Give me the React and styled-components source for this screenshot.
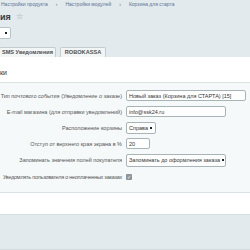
import React from 'react';
import styled, { createGlobalStyle } from 'styled-components';

const Global = createGlobalStyle`
  html, body {
    margin: 0;
    background: #e3eaed;
    font-family: "Liberation Sans", Arial, sans-serif;
  }
`;

const Page = styled.div`
  width: 250px;
  height: 250px;
  overflow: hidden;
  display: flex;
  flex-direction: column;
`;

const Crumbs = styled.div`
  display: flex;
  gap: 8px;
  padding: 1px 0 0 1px;
  height: 8px;
  font-size: 5px;
  line-height: 7px;
  color: #5a7395;
  white-space: nowrap;
`;

const TitleRow = styled.div`
  display: flex;
  align-items: center;
  gap: 5px;
  height: 13px;
  margin-top: 2px;
`;

const Title = styled.span`
  font-size: 9px;
  font-weight: bold;
  color: #3a3a3a;
`;

const Star = styled.span`
  font-size: 8px;
  color: #8a9499;
`;

const SmallSelect = styled.div`
  margin: 4px 0 0 -11px;
  width: 17px;
  height: 10px;
  background: #fff;
  border: 1px solid #b9c3c7;
  border-radius: 2px;
  display: flex;
  align-items: center;
  justify-content: flex-end;
  padding-right: 3px;
  box-sizing: content-box;
`;

const Arrow = styled.span`
  flex: none;
  width: 2px;
  height: 2px;
  background: #222;
`;

const Tabs = styled.div`
  display: flex;
  gap: 4px;
  margin-top: 8px;
  height: 11px;
  margin-left: -1px;
`;

const Tab = styled.div`
  width: ${p => p.w}px;
  background: #f1f5f6;
  border: 1px solid #c3cdd1;
  border-bottom: none;
  border-radius: 2px 2px 0 0;
  font-size: 5.6px;
  font-weight: bold;
  color: #505050;
  display: flex;
  align-items: center;
  justify-content: center;
  white-space: nowrap;
`;

const Header = styled.div`
  background: #fff;
  height: 26px;
  box-sizing: border-box;
  padding: 12px 0 0 0;
  font-size: 7px;
  color: #333;
  border-bottom: 1px solid #dbe3e6;
`;

const Content = styled.div`
  background: #f5f9fa;
  padding: 7px 0 9px;
  display: flex;
  flex-direction: column;
  gap: 4px;
  border-bottom: 1px solid #dbe3e6;
`;

const Row = styled.div`
  display: grid;
  grid-template-columns: 122px auto;
  column-gap: 4px;
  align-items: center;
  min-height: 12px;
`;

const Label = styled.div`
  display: flex;
  justify-content: flex-end;
  font-size: 5.5px;
  letter-spacing: ${p => (p.tight ? '-0.26px' : 'normal')};
  color: #555;
  white-space: nowrap;
`;

const Field = styled.div`
  width: ${p => p.w}px;
  height: ${p => p.h || 11}px;
  box-sizing: border-box;
  background: #fff;
  border: 1px solid #a9b4b9;
  border-radius: 2px;
  font-size: 5.5px;
  color: #333;
  padding: 0 3px 0 2px;
  display: flex;
  align-items: center;
  justify-content: space-between;
  gap: 2px;
  white-space: nowrap;
  overflow: hidden;
`;

const Check = styled.div`
  width: 6px;
  height: 6px;
  background: #8a949a;
  border-radius: 1px;
  color: #fff;
  font-size: 5px;
  line-height: 6px;
  text-align: center;
`;

const Footer = styled.div`
  background: #fff;
  height: 22px;
  border-bottom: 1px solid #d6dee1;
`;

const Bottom = styled.div`
  height: 36px;
  background: #e3eaed;
  border-bottom: 1px solid #d2dadd;
`;

const Tail = styled.div`
  flex: 1;
  background: #eef2f3;
`;

function App() {
  return (
    <Page>
      <Global />
      <Crumbs>
        <span>Настройки продукта</span>
        <span>›</span>
        <span>Настройки модулей</span>
        <span>›</span>
        <span>Корзина для старта</span>
      </Crumbs>
      <TitleRow>
        <Title>ия</Title>
        <Star>☆</Star>
      </TitleRow>
      <SmallSelect><Arrow /></SmallSelect>
      <Tabs>
        <Tab w={55}>SMS Уведомления</Tab>
        <Tab w={44}>ROBOKASSA</Tab>
      </Tabs>
      <Header>ки</Header>
      <Content>
        <Row>
          <Label>Тип почтового события (Уведомление о заказе)</Label>
          <Field w={120}>Новый заказ (Корзина для СТАРТА) [15]</Field>
        </Row>
        <Row>
          <Label>E-mail магазина (для отправки уведомлений)</Label>
          <Field w={100}>info@ssk24.ru</Field>
        </Row>
        <Row>
          <Label>Расположение корзины</Label>
          <Field w={30} h={12}>Справа <Arrow /></Field>
        </Row>
        <Row>
          <Label>Отступ от верхнего края экрана в %</Label>
          <Field w={24}>20</Field>
        </Row>
        <Row>
          <Label>Запоминать значения полей покупателя</Label>
          <Field w={100} h={13}>Запоминать до оформления заказа <Arrow /></Field>
        </Row>
        <Row>
          <Label tight>Уведомлять пользователя о неоплаченных заказах</Label>
          <Check>✓</Check>
        </Row>
      </Content>
      <Footer />
      <Bottom />
      <Tail />
    </Page>
  );
}

export default App;
